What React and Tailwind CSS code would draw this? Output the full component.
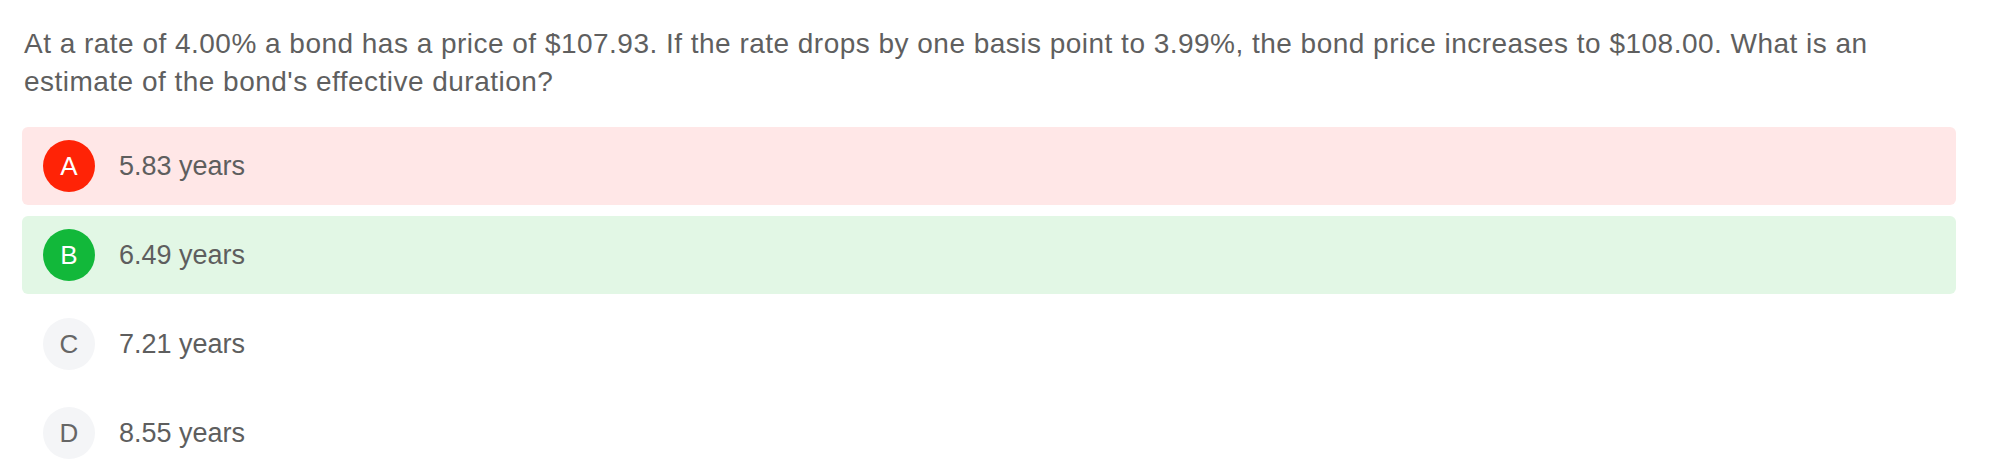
const options = [
  { key: "A", text: "5.83 years", state: "wrong" },
  { key: "B", text: "6.49 years", state: "right" },
  { key: "C", text: "7.21 years", state: "none" },
  { key: "D", text: "8.55 years", state: "none" },
];

function Option({ opt }) {
  const row =
    opt.state === "wrong"
      ? "bg-[#ffe7e7]"
      : opt.state === "right"
      ? "bg-[#e2f7e5]"
      : "bg-white";
  const badge =
    opt.state === "wrong"
      ? "bg-[#ff2306] text-white"
      : opt.state === "right"
      ? "bg-[#12b83a] text-white"
      : "bg-[#f4f5f7] text-[#666666]";

  return (
    <div className={`flex h-[78px] items-center rounded-md pl-[21px] ${row}`}>
      <div
        className={`flex h-[52px] w-[52px] shrink-0 items-center justify-center rounded-full text-[26px] ${badge}`}
      >
        {opt.key}
      </div>
      <span className="ml-[24px] text-[27px] text-[#5e5e5e]">{opt.text}</span>
    </div>
  );
}

export default function App() {
  return (
    <div
      className="min-h-screen bg-white pl-[22px] pr-[44px] pt-[25px]"
      style={{ fontFamily: '"Liberation Sans", Arial, sans-serif' }}
    >
      <p className="pl-[2px] text-[28px] leading-[38px] tracking-[0.48px] text-[#5f5f5f]">
        At a rate of 4.00% a bond has a price of $107.93. If the rate drops by
        one basis point to 3.99%, the bond price increases to $108.00. What is
        an estimate of the bond's effective duration?
      </p>
      <div className="mt-[26px] flex flex-col gap-[11px]">
        {options.map((o) => (
          <Option key={o.key} opt={o} />
        ))}
      </div>
    </div>
  );
}
